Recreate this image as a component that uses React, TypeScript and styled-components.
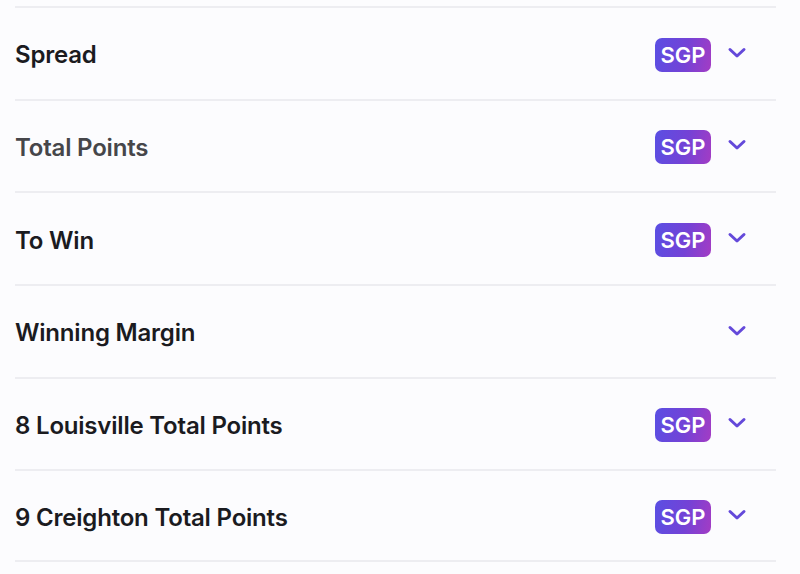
import styled, { createGlobalStyle } from "styled-components";

const GlobalStyle = createGlobalStyle`
  html, body {
    margin: 0;
    padding: 0;
    background: #fcfcfe;
  }
`;

const markets = [
    { name: "Spread", sgp: true },
    { name: "Total Points", sgp: true, muted: true },
    { name: "To Win", sgp: true },
    { name: "Winning Margin", sgp: false },
    { name: "8 Louisville Total Points", sgp: true },
    { name: "9 Creighton Total Points", sgp: true },
];

const List = styled.div`
  width: 800px;
  height: 574px;
  box-sizing: border-box;
  padding: 6px 24px 0 15px;
  background: #fcfcfe;
  font-family: Inter, "Noto Sans", sans-serif;
  overflow: hidden;
`;

const Row = styled.div<{ $last?: boolean }>`
  height: 92.67px;
  box-sizing: border-box;
  padding-top: 3px;
  display: flex;
  align-items: center;
  justify-content: space-between;
  border-top: 2px solid #ededf1;
  border-bottom: ${(p) => (p.$last ? "2px solid #ededf1" : "none")};
`;

const Title = styled.span<{ $muted?: boolean }>`
  font-size: 24px;
  font-weight: 600;
  letter-spacing: -0.2px;
  color: ${(p) => (p.$muted ? "#46464a" : "#1b1b1f")};
`;

const Right = styled.div`
  display: flex;
  align-items: center;
  gap: 16px;
  padding-right: 29px;
`;

const Badge = styled.span`
  width: 56px;
  height: 34px;
  border-radius: 7px;
  background: linear-gradient(100deg, #5a4fe3 0%, #7442d6 55%, #a33cc4 100%);
  color: #fff;
  font-size: 22px;
  font-weight: 600;
  display: flex;
  align-items: center;
  justify-content: center;
`;

const Chevron = styled.svg`
  width: 20px;
  height: 20px;
  flex: none;
  margin-top: -4px;
`;

function ChevronDown() {
    return (
        <Chevron viewBox="0 0 20 20">
            <path d="M3 6.5 L10 13 L17 6.5" fill="none" stroke="#6449da" strokeWidth="3" strokeLinecap="round" strokeLinejoin="round" />
        </Chevron>
    );
}

export default function App() {
    return (
        <>
            <GlobalStyle />
            <List>
                {markets.map((m, i) => (
                    <Row key={m.name} $last={i === markets.length - 1}>
                        <Title $muted={m.muted}>{m.name}</Title>
                        <Right>
                            {m.sgp && <Badge>SGP</Badge>}
                            <ChevronDown />
                        </Right>
                    </Row>
                ))}
            </List>
        </>
    );
}
